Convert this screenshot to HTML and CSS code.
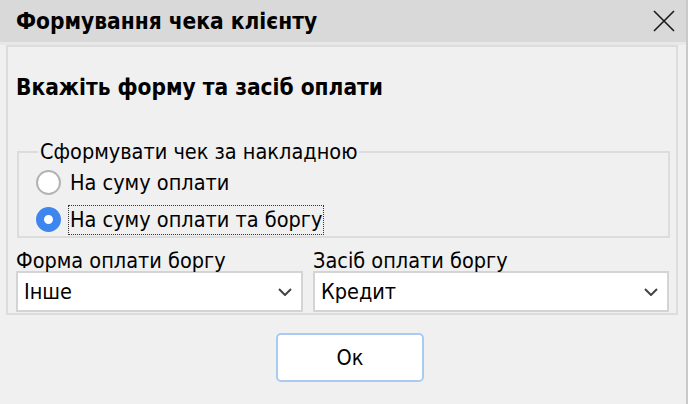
FILE: index.html
```html
<!DOCTYPE html>
<html lang="uk">
<head>
<meta charset="utf-8">
<link rel="stylesheet" href="styles.css">
</head>
<body>
<div class="window">
  <div class="titlebar">
    <span class="title">Формування чека клієнту</span>
    <svg class="close" width="22" height="22" viewBox="0 0 22 22"><path d="M1 1L21 21M21 1L1 21" stroke="#1a1a1a" stroke-width="1.6" fill="none"/></svg>
  </div>
  <div class="panel">
    <div class="heading">Вкажіть форму та засіб оплати</div>
    <fieldset class="group">
      <legend>Сформувати чек за накладною</legend>
      <label class="radio"><span class="dot"></span><span class="rtext">На суму оплати</span></label>
      <label class="radio checked"><span class="dot"></span><span class="rtext focus">На суму оплати та боргу</span></label>
    </fieldset>
    <div class="fields">
      <div class="field">
        <div class="flabel">Форма оплати боргу</div>
        <div class="combo"><span>Інше</span><svg class="chev" width="14" height="8" viewBox="0 0 14 8"><path d="M1 1L7 7L13 1" stroke="#444" stroke-width="2" fill="none"/></svg></div>
      </div>
      <div class="field">
        <div class="flabel">Засіб оплати боргу</div>
        <div class="combo"><span>Кредит</span><svg class="chev" width="14" height="8" viewBox="0 0 14 8"><path d="M1 1L7 7L13 1" stroke="#444" stroke-width="2" fill="none"/></svg></div>
      </div>
    </div>
  </div>
  <div class="actions">
    <button class="btn">Ок</button>
  </div>
</div>
</body>
</html>
```

FILE: styles.css
```css
html, body {
  margin: 0;
  padding: 0;
  background: #f0f0f0;
}
body {
  font-family: "DejaVu Sans Condensed", "DejaVu Sans", sans-serif;
  font-size: 21.5px;
  color: #000;
}
.window {
  width: 688px;
  height: 404px;
  box-sizing: border-box;
  border-right: 2px solid #c9c9c9;
  background: #f0f0f0;
}
.titlebar {
  height: 42px;
  background: #d9d9d9;
  border-bottom: 3px solid #e8e8e8;
  display: flex;
  align-items: center;
  justify-content: space-between;
  padding: 0 11px 0 16px;
}
.title {
  font-weight: bold;
  font-size: 22.5px;
  line-height: 24px;
}
.close {
  display: block;
}
.panel {
  margin: 0 8px 0 6px;
  box-sizing: border-box;
  border: 2px solid #dcdcdc;
  padding: 0 7px 1px 8px;
}
.heading {
  font-weight: bold;
  font-size: 22.5px;
  margin-top: 28px;
  line-height: 24px;
}
.group {
  margin: 41px -1px 0 1px;
  padding: 0 0 0 17px;
  border: 2px solid #dcdcdc;
  height: 98px;
  box-sizing: border-box;
}
.group legend {
  padding: 0 2px;
  margin-left: 2px;
  line-height: 24px;
}
.radio {
  display: flex;
  align-items: center;
  height: 37px;
}
.dot {
  width: 25px;
  height: 25px;
  border: 2px solid #b3b3b3;
  border-radius: 50%;
  background: #fff;
  margin-right: 8px;
  box-sizing: border-box;
  flex: none;
}
.checked .dot {
  border: 8px solid #3d86ee;
}
.rtext {
  padding: 1px;
  line-height: 26px;
  border: 1px solid transparent;
  margin-left: -1px;
}
.focus {
  border: 1px dotted #333;
}
.fields {
  display: flex;
  gap: 10px;
  margin-top: 11px;
}
.field {
  flex: 1;
}
.field:first-child {
  flex: 0 0 287px;
}
.flabel {
  line-height: 24px;
  height: 22px;
}
.combo {
  height: 41px;
  box-sizing: border-box;
  background: #fff;
  border: 2px solid #d4d4d4;
  display: flex;
  align-items: center;
  justify-content: space-between;
  padding: 0 9px 0 6px;
}
.chev {
  display: block;
}
.actions {
  display: flex;
  justify-content: center;
  padding-top: 18px;
  padding-left: 14px;
}
.btn {
  width: 148px;
  height: 49px;
  background: #fff;
  border: 2px solid #a9cbf2;
  border-radius: 5px;
  font-family: "DejaVu Sans Condensed", "DejaVu Sans", sans-serif;
  font-size: 21.5px;
  color: #000;
  padding: 0;
}
```
